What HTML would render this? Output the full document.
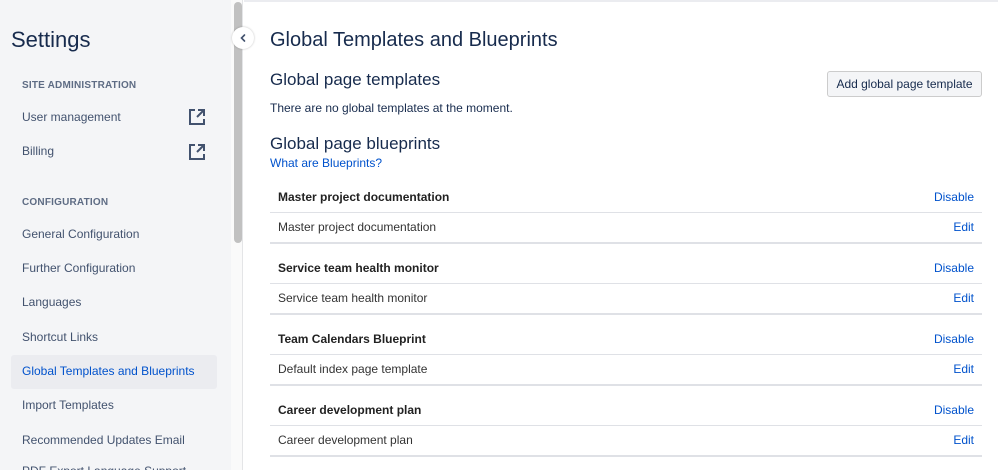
<!DOCTYPE html>
<html style="overflow:hidden"><head><style>
*{margin:0;padding:0;box-sizing:border-box}
html,body{width:998px;height:470px;overflow:hidden}
body{background:#fff;font-family:"Liberation Sans",Arial,sans-serif;position:relative;color:#172b4d}
.side{position:absolute;left:0;top:0;width:231px;height:470px;background:#f4f5f7}
.track{position:absolute;left:231px;top:0;width:12px;height:470px;background:#fafafa;border-right:1px solid #e4e5e7}
.thumb{position:absolute;left:234px;top:2px;width:8px;height:241px;background:#c1c1c1;border-radius:4px}
.topline{position:absolute;left:244px;top:0;right:0;height:2px;background:#ebecf0}
h1.s{position:absolute;left:11px;top:27px;font-size:22px;font-weight:400;color:#172b4d}
.cap{position:absolute;left:22px;font-size:10px;font-weight:700;color:#5e6c84;letter-spacing:.2px}
.it{position:absolute;left:22px;font-size:12px;color:#42526e}
.sel{position:absolute;left:11px;top:355px;width:206px;height:34px;background:#ebecf0;border-radius:3px}
.ext{position:absolute;left:188px}
.col{position:absolute;left:232px;top:27px;width:22px;height:22px;border-radius:50%;background:#fff;box-shadow:0 0 2px rgba(0,0,0,.25)}
.m{position:absolute}
.row{position:absolute;left:270px;width:712px;font-size:12px;color:#333}
.row b{color:#222}
.a{color:#0052cc}
</style></head><body>
<div class="side"></div>
<div class="sel"></div>
<div class="track"></div><div class="thumb"></div>
<div class="topline"></div>
<div class="col"><svg width="22" height="22"><path d="M12.5 8 L9.5 11 L12.5 14" stroke="#42526e" stroke-width="1.6" fill="none" stroke-linecap="round"/></svg></div>
<h1 class="s">Settings</h1>
<div class="cap" style="top:80px">SITE ADMINISTRATION</div>
<div class="it" style="top:110px">User management</div>
<div class="it" style="top:144px">Billing</div>
<svg class="ext" style="top:108px" width="18" height="18" viewBox="0 0 18 18"><path d="M7 2H2v14h14v-5M10 2h6v6M16 2L9 9" stroke="#42526e" stroke-width="2" fill="none"/></svg>
<svg class="ext" style="top:143px" width="18" height="18" viewBox="0 0 18 18"><path d="M7 2H2v14h14v-5M10 2h6v6M16 2L9 9" stroke="#42526e" stroke-width="2" fill="none"/></svg>
<div class="cap" style="top:197px">CONFIGURATION</div>
<div class="it" style="top:227px">General Configuration</div>
<div class="it" style="top:261px">Further Configuration</div>
<div class="it" style="top:295px">Languages</div>
<div class="it" style="top:330px">Shortcut Links</div>
<div class="it" style="top:364px;color:#0052cc">Global Templates and Blueprints</div>
<div class="it" style="top:398px">Import Templates</div>
<div class="it" style="top:433px">Recommended Updates Email</div>
<div class="it" style="top:464px">PDF Export Language Support</div>

<div class="m" style="left:270px;top:29px;font-size:20px">Global Templates and Blueprints</div>
<div class="m" style="left:270px;top:70px;font-size:17px">Global page templates</div>
<div class="m" style="left:827px;top:71px;width:155px;height:26px;border:1px solid #ccc;border-radius:3px;background:#f4f5f7;font-size:12px;text-align:center;line-height:24px;color:#172b4d">Add global page template</div>
<div class="m" style="left:270px;top:101px;font-size:12px;color:#172b4d">There are no global templates at the moment.</div>
<div class="m" style="left:270px;top:134px;font-size:17px">Global page blueprints</div>
<div class="m a" style="left:270px;top:156px;font-size:12px">What are Blueprints?</div>

<div class="row" style="top:181px;height:32px;border-bottom:1px solid #dfe1e6"><b style="position:absolute;left:8px;top:9px">Master project documentation</b><span class="a" style="position:absolute;right:8px;top:9px">Disable</span></div>
<div class="row" style="top:213px;height:31px;border-bottom:2px solid #dfe1e6"><span style="position:absolute;left:8px;top:7px">Master project documentation</span><span class="a" style="position:absolute;right:8px;top:7px">Edit</span></div>
<div class="row" style="top:252px;height:32px;border-bottom:1px solid #dfe1e6"><b style="position:absolute;left:8px;top:9px">Service team health monitor</b><span class="a" style="position:absolute;right:8px;top:9px">Disable</span></div>
<div class="row" style="top:284px;height:31px;border-bottom:2px solid #dfe1e6"><span style="position:absolute;left:8px;top:7px">Service team health monitor</span><span class="a" style="position:absolute;right:8px;top:7px">Edit</span></div>
<div class="row" style="top:323px;height:32px;border-bottom:1px solid #dfe1e6"><b style="position:absolute;left:8px;top:9px">Team Calendars Blueprint</b><span class="a" style="position:absolute;right:8px;top:9px">Disable</span></div>
<div class="row" style="top:355px;height:31px;border-bottom:2px solid #dfe1e6"><span style="position:absolute;left:8px;top:7px">Default index page template</span><span class="a" style="position:absolute;right:8px;top:7px">Edit</span></div>
<div class="row" style="top:394px;height:32px;border-bottom:1px solid #dfe1e6"><b style="position:absolute;left:8px;top:9px">Career development plan</b><span class="a" style="position:absolute;right:8px;top:9px">Disable</span></div>
<div class="row" style="top:426px;height:31px;border-bottom:2px solid #dfe1e6"><span style="position:absolute;left:8px;top:7px">Career development plan</span><span class="a" style="position:absolute;right:8px;top:7px">Edit</span></div>
</body></html>
